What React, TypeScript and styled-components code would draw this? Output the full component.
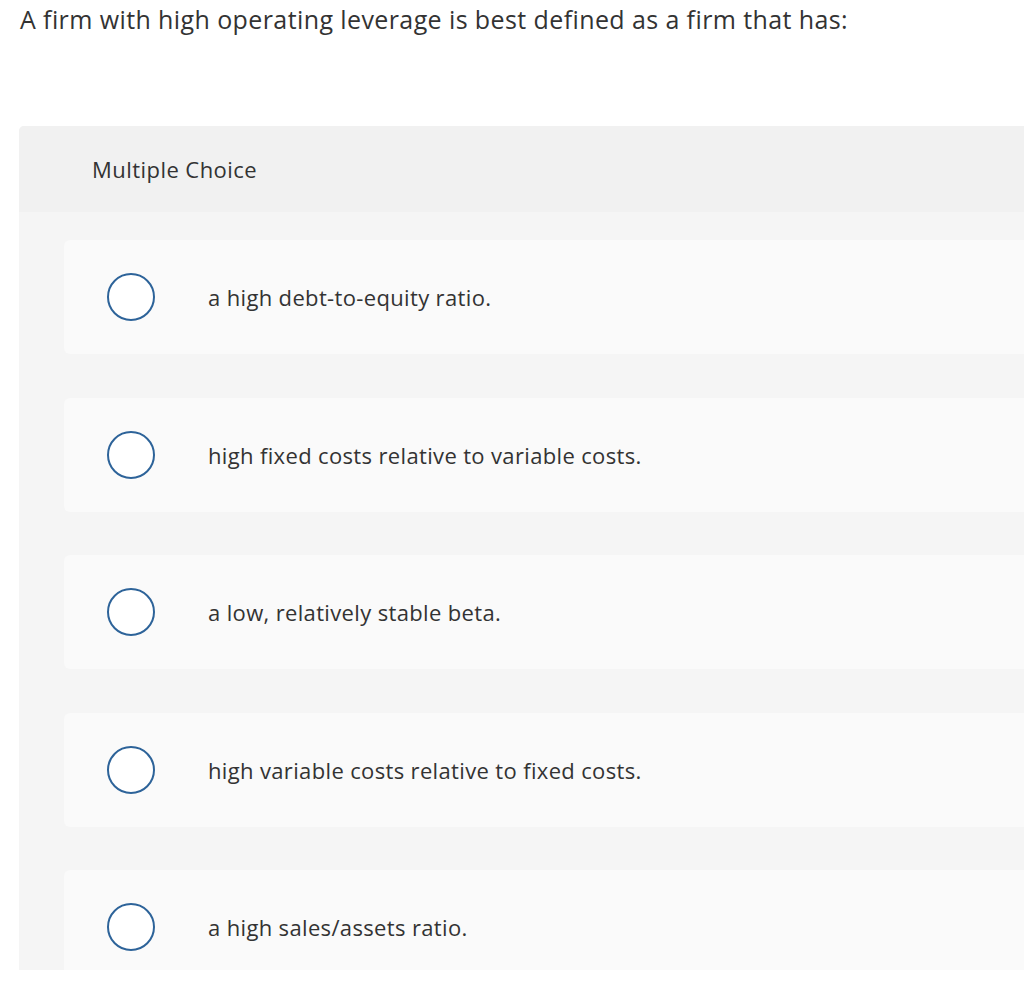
import styled, { createGlobalStyle } from "styled-components";

const GlobalStyle = createGlobalStyle`
  html, body {
    margin: 0;
    padding: 0;
    background: #ffffff;
  }
  body {
    font-family: "Open Sans", "Liberation Sans", sans-serif;
    color: #333333;
  }
`;

const choices = [
  "a high debt-to-equity ratio.",
  "high fixed costs relative to variable costs.",
  "a low, relatively stable beta.",
  "high variable costs relative to fixed costs.",
  "a high sales/assets ratio.",
];

function App() {
  return (
    <>
      <GlobalStyle />
      <Page>
        <Question>
          A firm with high operating leverage is best defined as a firm that has:
        </Question>
        <Panel>
          <PanelHeader>Multiple Choice</PanelHeader>
          <ChoiceList>
            {choices.map((choice) => (
              <Choice key={choice}>
                <Radio type="radio" name="answer" aria-label={choice} />
                <ChoiceText>{choice}</ChoiceText>
              </Choice>
            ))}
          </ChoiceList>
        </Panel>
      </Page>
    </>
  );
}

const Page = styled.div`
  padding-left: 19px;
  overflow: hidden;
  height: 993px;
`;

const Question = styled.h1`
  margin: 0;
  padding: 3px 0 0 1px;
  font-size: 25px;
  font-weight: 400;
  letter-spacing: 0.4px;
  line-height: 32px;
  color: #333333;
`;

const Panel = styled.div`
  margin-top: 91px;
  margin-right: -200px;
  height: 844px;
  overflow: hidden;
  border-radius: 5px 5px 0 0;
  background: #f5f5f5;
`;

const PanelHeader = styled.div`
  height: 86px;
  display: flex;
  align-items: center;
  padding-left: 73px;
  background: #f1f1f1;
  font-size: 22px;
  letter-spacing: 0.45px;
  color: #333333;
`;

const ChoiceList = styled.div`
  display: flex;
  flex-direction: column;
  gap: 43.5px;
  padding: 28px 0 0 45px;
`;

const Choice = styled.label`
  flex: none;
  height: 114px;
  display: flex;
  align-items: center;
  padding-left: 43px;
  border-radius: 6px;
  background: #fafafa;
  cursor: pointer;
`;

const Radio = styled.input`
  appearance: none;
  margin: 0;
  width: 48px;
  height: 48px;
  border: 2px solid #2d6399;
  border-radius: 50%;
  background: #ffffff;
  flex: none;
`;

const ChoiceText = styled.span`
  margin-left: 53px;
  font-size: 22px;
  letter-spacing: 0.35px;
  color: #333333;
`;

export default App;
